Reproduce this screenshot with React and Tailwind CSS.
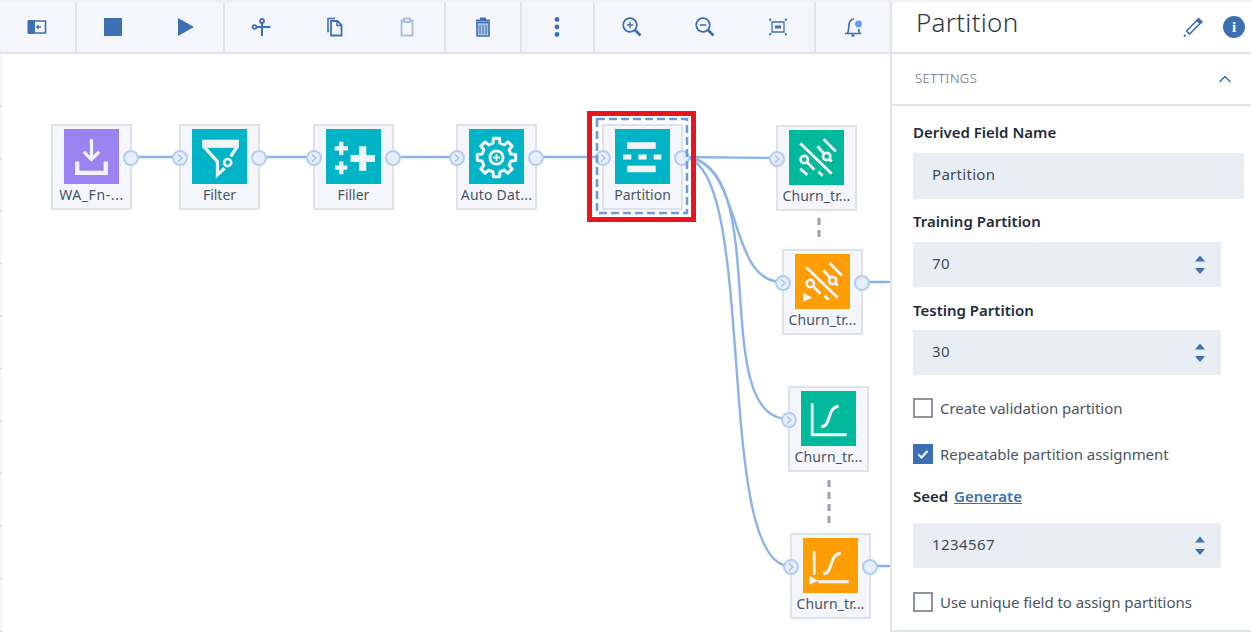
import React from 'react';
import { ChevronUp } from 'lucide-react';

const BLUE = '#3d70b2';

const gearPath = (cx, cy, r1, r2, teeth) => {
  const pts = [];
  const step = (Math.PI * 2) / teeth;
  for (let i = 0; i < teeth; i++) {
    const a = i * step - Math.PI / 2;
    const w = step * 0.2;
    const w2 = step * 0.3;
    [[r2, a - w2], [r1, a - w], [r1, a + w], [r2, a + w2]].forEach(([r, t]) => {
      pts.push(`${(cx + r * Math.cos(t)).toFixed(1)} ${(cy + r * Math.sin(t)).toFixed(1)}`);
    });
  }
  return 'M' + pts.join('L') + 'Z';
};

const Glyph = ({ children, fill = 'none' }) => (
  <svg viewBox="0 0 54 54" className="w-full h-full" fill={fill} stroke="#f2f4f8" strokeWidth="3.2">
    {children}
  </svg>
);

const DownloadIcon = () => (
  <Glyph>
    <path d="M27 10V30M19.5 22.5L27 30L34.5 22.5" />
    <path d="M13 32V43H41V32" strokeWidth="4.2" />
  </Glyph>
);

const FilterIcon = () => (
  <Glyph>
    <rect x="10" y="10.5" width="36" height="8" fill="#f2f4f8" stroke="none" />
    <path d="M44.5 17L38 27" />
    <path d="M11.5 17L25 32V45L32 38.5" />
    <circle cx="35" cy="33" r="3.5" strokeWidth="2.6" />
  </Glyph>
);

const FillerIcon = () => (
  <Glyph>
    <path d="M15 12.5V25.5M8.5 19H21.5M15 32V44.5M9 38H21" strokeWidth="4.2" />
    <path d="M36 17V41M24 29H48" strokeWidth="7" />
  </Glyph>
);

const GearIcon = () => (
  <Glyph>
    <path d={gearPath(27, 28, 19, 14.5, 8)} strokeWidth="3" strokeLinejoin="round" />
    <circle cx="27" cy="28" r="6.5" strokeWidth="2.8" />
    <path d="M27 24.5V31.5M23.5 28H30.5" strokeWidth="1.8" />
  </Glyph>
);

const PartitionIcon = () => (
  <svg viewBox="0 0 54 54" className="w-full h-full" fill="#f2f4f8">
    <rect x="12" y="13" width="28" height="6.5" />
    <rect x="8" y="25" width="8" height="5" />
    <rect x="23" y="25" width="8" height="5" />
    <rect x="38" y="25" width="7.5" height="5" />
    <rect x="12" y="36" width="28" height="6.5" />
  </svg>
);

const SlidersIcon = ({ play }) => (
  <Glyph>
    <path d="M11 13L42 43" strokeWidth="2.8" />
    <path d="M34 9L46 21M28 16L34 23M40 29L42 31" strokeWidth="2.8" />
    <circle cx="37" cy="26" r="3.6" strokeWidth="2.6" />
    <circle cx="15" cy="29" r="3.6" strokeWidth="2.6" />
    <path d="M18 32L25 39M29 41L33 45" strokeWidth="2.8" />
    {play ? (
      <path d="M8 38L17 43L8 47Z" fill="#f2f4f8" strokeWidth="0" />
    ) : (
      <path d="M11 38L18 44" strokeWidth="2.8" />
    )}
  </Glyph>
);

const ChartIcon = ({ play }) => (
  <Glyph>
    {play ? (
      <>
        <path d="M11 13V36M15 43H45" strokeWidth="2.8" />
        <path d="M6 37L15 42L6 46Z" fill="#f2f4f8" strokeWidth="0" />
      </>
    ) : (
      <path d="M11 12V43H45" strokeWidth="2.8" />
    )}
    <path d="M20 35C30 35 25 16 37 15" strokeWidth="3" />
  </Glyph>
);

const nodes = [
  { key: 'wa', box: 'left-[51px] top-[70px]', color: 'bg-[#9b84f2]', label: 'WA_Fn-...', track: 'tracking-[0.6px]', icon: <DownloadIcon />, input: false, output: true },
  { key: 'filter', box: 'left-[179px] top-[70px]', color: 'bg-[#00b4c8]', label: 'Filter', track: '', icon: <FilterIcon />, input: true, output: true },
  { key: 'filler', box: 'left-[313px] top-[70px]', color: 'bg-[#00b4c8]', label: 'Filler', track: '', icon: <FillerIcon />, input: true, output: true },
  { key: 'auto', box: 'left-[456px] top-[70px]', color: 'bg-[#00b4c8]', label: 'Auto Dat...', track: 'tracking-[0.2px]', icon: <GearIcon />, input: true, output: true },
  { key: 'partition', box: 'left-[602px] top-[70px]', color: 'bg-[#00b4c8]', label: 'Partition', track: '', icon: <PartitionIcon />, input: true, output: true },
  { key: 'm1', box: 'left-[776px] top-[71px]', color: 'bg-[#00b89c]', label: 'Churn_tr...', track: 'tracking-[0.1px]', icon: <SlidersIcon />, input: true, output: false },
  { key: 'm2', box: 'left-[782px] top-[195px]', color: 'bg-[#ff9d04]', label: 'Churn_tr...', track: 'tracking-[0.1px]', icon: <SlidersIcon play />, input: true, output: true },
  { key: 'm3', box: 'left-[788px] top-[332px]', color: 'bg-[#00b89c]', label: 'Churn_tr...', track: 'tracking-[0.1px]', icon: <ChartIcon />, input: true, output: false },
  { key: 'm4', box: 'left-[790px] top-[479px]', color: 'bg-[#ff9d04]', label: 'Churn_tr...', track: 'tracking-[0.1px]', icon: <ChartIcon play />, input: true, output: true },
];

const Port = ({ side, chevron }) => (
  <svg
    viewBox="0 0 16 16"
    className={`absolute top-[24px] w-4 h-4 ${side === 'left' ? 'left-[-9px]' : 'right-[-9px]'}`}
  >
    <circle cx="8" cy="8" r="7" fill="#e6eefb" stroke="#b3cdf0" strokeWidth="2" />
    {chevron && <path d="M6 4.5L10 8L6 11.5" fill="none" stroke="#9dbce8" strokeWidth="1.2" />}
  </svg>
);

const FlowNode = ({ node }) => (
  <div className={`absolute ${node.box} w-[81px] h-[86px] bg-[#f4f6fb] border-2 border-[#dfe3e8] flex flex-col items-center pt-[3px]`}>
    <div className={`w-[55px] h-[55px] shrink-0 ${node.color}`}>{node.icon}</div>
    <span className={`mt-[2px] text-[14px] leading-[18px] text-[#4a5560] whitespace-nowrap ${node.track}`}>{node.label}</span>
    {node.input && <Port side="left" chevron />}
    {node.output && <Port side="right" />}
  </div>
);

const Edges = () => (
  <svg className="absolute left-0 top-[-54px] w-[891px] h-[632px]" fill="none" stroke="#8ab4e8" strokeWidth="2.4">
    <path d="M1 53V632" stroke="#f6f6f7" strokeWidth="2" />
    <path d="M1 105V632" stroke="#e2e3e5" strokeWidth="3" strokeDasharray="2 50.5" />
    <path d="M131 157H180M260 157H313M393 157H456M536 157H602M682 157L777 158" />
    <path d="M682 157C745 157 725 282 782 282" />
    <path d="M682 157C776 157 706 419 788 419" />
    <path d="M682 157C760 157 712 566 790 566" />
    <path d="M862 282H891M870 566H891" />
    <path d="M819 218V238M829 480V524" stroke="#9aa3ab" strokeDasharray="7 5" strokeWidth="3" />
  </svg>
);

const ToolButton = ({ children, w }) => (
  <div className={`${w} h-full flex items-center justify-center`}>
    <svg viewBox="0 0 24 24" className="w-6 h-6" fill="none" stroke={BLUE} strokeWidth="1.8">
      {children}
    </svg>
  </div>
);

const Toolbar = () => (
  <div className="h-[52px] shrink-0 bg-[#f4f6fb] border-b-2 border-[#e0e3e8] flex">
    <div className="w-[77px] border-r-2 border-[#e0e3e8] flex">
      <ToolButton w="w-full">
        <path d="M3 5.5H9.5V18.5H3Z" fill={BLUE} strokeWidth="1" />
        <path d="M9.5 6H20.5V18H9.5" strokeWidth="1.6" />
        <path d="M12 12H16M13.5 10.2L11.8 12L13.5 13.8" strokeWidth="1.4" />
      </ToolButton>
    </div>
    <div className="w-[148px] border-r-2 border-[#e0e3e8] flex">
      <ToolButton w="w-[73px]">
        <rect x="3" y="3" width="18" height="18" fill={BLUE} stroke="none" />
      </ToolButton>
      <ToolButton w="w-[73px]">
        <path d="M4 3L20 12L4 21Z" fill={BLUE} stroke="none" />
      </ToolButton>
    </div>
    <div className="w-[221px] border-r-2 border-[#e0e3e8] flex pl-[1px]">
      <ToolButton w="w-[73px]">
        <circle cx="12" cy="6" r="2" />
        <circle cx="4.5" cy="12" r="1.9" />
        <path d="M6.5 12H20.5M12 8V21" strokeWidth="2" />
      </ToolButton>
      <ToolButton w="w-[73px]">
        <path d="M6 16.5H5V3.5H12" strokeWidth="1.6" />
        <path d="M8 6H14.5L18.5 10V20.5H8Z" strokeWidth="1.8" />
        <path d="M14 6V10.5H18" strokeWidth="1.4" />
      </ToolButton>
      <ToolButton w="w-[73px]">
        <g opacity="0.42">
          <path d="M9 5.5H6.5V20.5H17.5V5.5H15M9 3.5H15V7H9Z" strokeWidth="1.8" />
        </g>
      </ToolButton>
    </div>
    <div className="w-[76px] border-r-2 border-[#e0e3e8] flex">
      <ToolButton w="w-full">
        <path d="M6 7.5H18V21H6Z" fill="#a9c0df" strokeWidth="1.6" />
        <path d="M5 5.5H19M9 3.5H15" strokeWidth="2.2" />
        <path d="M9 10V19M12 10V19M15 10V19" strokeWidth="1" />
      </ToolButton>
    </div>
    <div className="w-[74px] border-r-2 border-[#e0e3e8] flex">
      <ToolButton w="w-full">
        <g fill={BLUE} stroke="none">
          <circle cx="12" cy="4.5" r="2.4" />
          <circle cx="12" cy="12" r="2.4" />
          <circle cx="12" cy="19.5" r="2.4" />
        </g>
      </ToolButton>
    </div>
    <div className="w-[221px] border-r-2 border-[#e0e3e8] flex">
      <ToolButton w="w-[73px]">
        <circle cx="10" cy="10" r="6.8" />
        <path d="M10 6.8V13.2M6.8 10H13.2" strokeWidth="1.4" />
        <path d="M15 15L20.5 20.5" strokeWidth="2.6" />
      </ToolButton>
      <ToolButton w="w-[73px]">
        <circle cx="10" cy="10" r="6.8" />
        <path d="M6.8 10H13.2" strokeWidth="1.6" />
        <path d="M15 15L20.5 20.5" strokeWidth="2.6" />
      </ToolButton>
      <ToolButton w="w-[73px]">
        <path d="M6 7H18V17H6Z" strokeWidth="1.3" />
        <rect x="9" y="10.5" width="6" height="3" fill={BLUE} stroke="none" />
        <path d="M3 4.5H4.5V6M21 4.5H19.5V6M3 19.5H4.5V18M21 19.5H19.5V18" strokeWidth="1.3" />
      </ToolButton>
    </div>
    <div className="w-[74px] flex">
      <ToolButton w="w-full">
        <path d="M4 18.5H20M6.5 18.5C8 15.5 7.5 13 8 9.5C8.5 6 10.5 4 13 4" strokeWidth="1.7" />
        <path d="M17.5 14C17.8 15.8 18 17 19 18.5" strokeWidth="1.7" />
        <path d="M10.5 20.5H13.5" strokeWidth="2.4" />
        <circle cx="17.5" cy="9" r="3.4" fill="#5aa2f0" stroke="none" />
      </ToolButton>
    </div>
  </div>
);

const Spinner = () => (
  <svg viewBox="0 0 12 20" className="w-3 h-5">
    <path d="M6 0.5L11 6.5H1Z M1 13H11L6 19Z" fill={BLUE} />
  </svg>
);

const FieldLabel = ({ children }) => (
  <div className="text-[15px] leading-[20px] font-semibold text-[#1f2d3a]">{children}</div>
);

const NumberField = ({ value }) => (
  <div className="w-[308px] h-[45px] bg-[#e9eef5] flex items-center justify-between pl-[19px] pr-[15px] pb-[2px] text-[15px] tracking-[0.4px] text-[#3f4b57]">
    <span>{value}</span>
    <div className="mt-[2px] flex"><Spinner /></div>
  </div>
);

const Check = ({ checked, label }) => (
  <div className="flex items-center gap-[7px] h-[20px]">
    {checked ? (
      <div className="w-[20px] h-[20px] bg-[#3d70b2] flex items-center justify-center">
        <svg viewBox="0 0 14 14" className="w-[14px] h-[14px]" fill="none" stroke="#fff" strokeWidth="2">
          <path d="M2.5 7.5L5.5 10.5L11.5 4" />
        </svg>
      </div>
    ) : (
      <div className="w-[20px] h-[20px] bg-white border-2 border-[#8c959e]" />
    )}
    <span className="text-[15px] text-[#4a5560] tracking-[-0.05px]">{label}</span>
  </div>
);

const SidePanel = () => (
  <div className="w-[361px] h-full shrink-0 bg-white border-l-2 border-[#e0e3e8] border-b-2 flex flex-col">
    <div className="h-[52px] shrink-0 border-b-2 border-[#e0e3e8] flex items-center pl-[24px] pr-[6px]">
      <span className="text-[26px] font-light tracking-[0.25px] text-[#2c3843] -mt-[10px]">Partition</span>
      <svg viewBox="0 0 24 24" className="ml-auto w-6 h-6" fill="none" stroke={BLUE} strokeWidth="1.6">
        <path d="M5.5 16L16 5.5L19 8.5L8.5 19Z" />
        <path d="M16.5 3.5L21 8" strokeWidth="3" />
        <path d="M3 21.5L4.5 20" strokeWidth="2" />
      </svg>
      <div className="ml-[18px] w-[22px] h-[22px] rounded-full bg-[#3d70b2] flex items-center justify-center text-white text-[15px] font-bold font-['Liberation_Serif',serif]">
        i
      </div>
    </div>
    <div className="h-[52px] shrink-0 border-b-2 border-[#e0e3e8] flex items-center pl-[23px] pr-[16px]">
      <span className="text-[13px] tracking-[0.5px] font-light text-[#5f6973]">SETTINGS</span>
      <ChevronUp className="ml-auto text-[#3d70b2] w-5 h-5" strokeWidth={1.8} />
    </div>
    <div className="pl-[21px] flex flex-col">
      <div className="mt-[16px]"><FieldLabel>Derived Field Name</FieldLabel></div>
      <div className="mt-[11px] w-[331px] h-[46px] bg-[#e9eef5] flex items-center pl-[19px] pb-[3px] text-[15px] tracking-[0.3px] text-[#3f4b57]">
        Partition
      </div>
      <div className="mt-[12px] mb-[11px]"><FieldLabel>Training Partition</FieldLabel></div>
      <NumberField value="70" />
      <div className="mt-[13px] mb-[10px]"><FieldLabel>Testing Partition</FieldLabel></div>
      <NumberField value="30" />
      <div className="mt-[23px]"><Check label="Create validation partition" /></div>
      <div className="mt-[26px]"><Check checked label="Repeatable partition assignment" /></div>
      <div className="mt-[22px] mb-[17px]">
        <FieldLabel>
          Seed <span className="ml-[2px] text-[#3d70b2] underline">Generate</span>
        </FieldLabel>
      </div>
      <NumberField value="1234567" />
      <div className="mt-[24px]"><Check label="Use unique field to assign partitions" /></div>
    </div>
  </div>
);

const Canvas = () => (
  <div className="relative flex-1 bg-white overflow-hidden">
    <Edges />
    {nodes.map(node => (
      <FlowNode key={node.key} node={node} />
    ))}
    <svg className="absolute left-[595px] top-[63px] w-[94px] h-[98px] pointer-events-none" fill="none">
      <rect x="2" y="2" width="90" height="94" stroke="#6b9bdc" strokeWidth="2.6" strokeDasharray="8 4" />
    </svg>
    <div className="absolute left-[587px] top-[57px] w-[109px] h-[111px] border-[5px] border-[#e8141f] pointer-events-none" />
  </div>
);

const App = () => {
  return (
    <div className="w-[1251px] h-[632px] overflow-hidden border-t-2 border-[#f0f0f0] flex font-['Noto_Sans',sans-serif]">
      <div className="w-[890px] h-full flex flex-col">
        <Toolbar />
        <Canvas />
      </div>
      <SidePanel />
    </div>
  );
};

export default App;
